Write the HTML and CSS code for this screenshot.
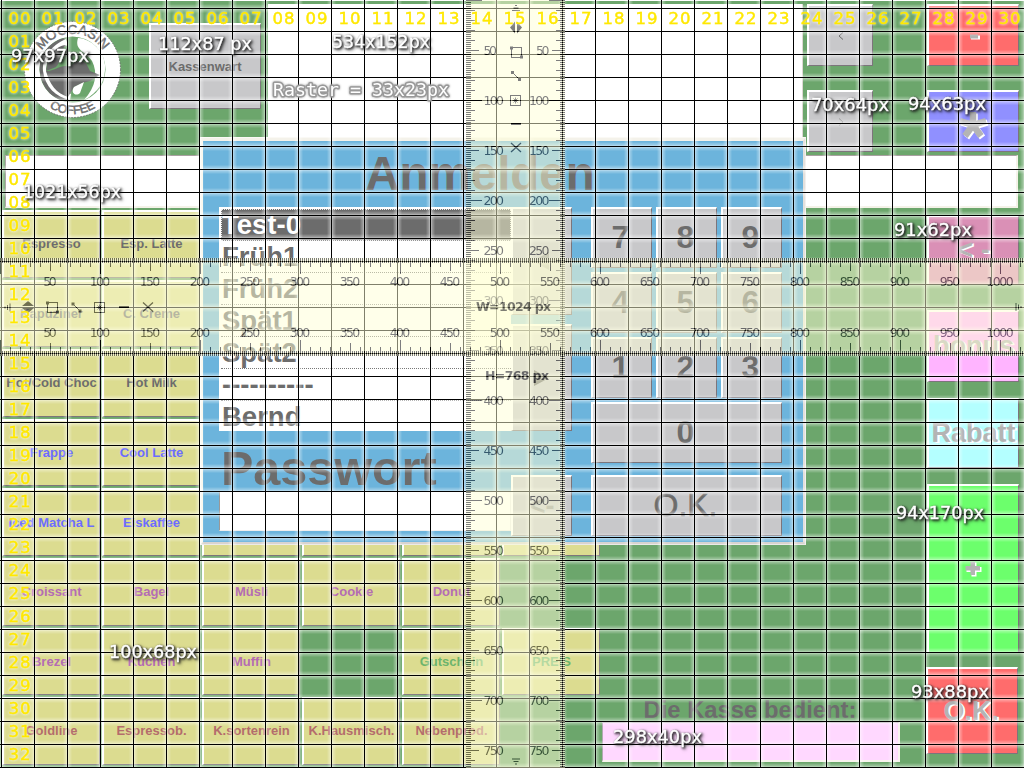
FILE: index.html
```html
<!DOCTYPE html>
<html lang="de">
<head>
<meta charset="utf-8">
<title>Kasse – Raster</title>
<link rel="stylesheet" href="styles.css">
</head>
<body>
<div class="screen">
  <div class="till">
    <header class="top">
      <svg class="logo" viewBox="0 0 97 97" width="97" height="97">
        <defs>
          <path id="arc-top" d="M12.500 48.500a36 36 0 0 1 72 0"/>
          <path id="arc-bottom" d="M4 48.500a44.500 44.500 0 0 0 89 0"/>
        </defs>
        <circle cx="48.500" cy="48.500" r="48" class="logo-rim"/>
        <circle cx="48.500" cy="48.500" r="33" class="logo-green"/>
        <path class="logo-dark" d="M40 17C22 22 14 38 16 52C18 68 30 80 46 81L46 77C34 75 24 66 21 54C19 42 24 30 42 20Z"/>
        <path class="logo-white" d="M42 18C28 24 18 36 19 50C21 66 32 76 46 79L47 73C34 70 24 60 22 48C23 36 32 28 44 24Z"/>
        <path class="logo-white" d="M54 17C68 18 80 30 81 44C82 60 74 72 60 79C72 66 74 52 68 40C62 30 50 30 54 17Z"/>
        <path class="logo-dark" d="M22 50C32 50 38 42 46 46C50 40 56 38 62 42L66 50L76 54L66 60L58 62L50 66L44 76C32 72 26 64 22 50Z"/>
        <path class="logo-dark" d="M24 38C28 30 36 24 42 24C34 32 38 40 32 46L22 50Z"/>
        <path class="logo-white" d="M50 66L60 61L56 72C52 76 46 72 50 66Z"/>
        <text class="logo-text"><textPath href="#arc-top" startOffset="50%" text-anchor="middle">MOCCASIN</textPath></text>
        <text class="logo-text small"><textPath href="#arc-bottom" startOffset="50%" text-anchor="middle">COFFEE</textPath></text>
      </svg>
      <button class="key gray clerk-key">Kassenwart</button>
      <div class="display"></div>
      <div class="nav">
        <button class="key gray nav-key" aria-label="&lt;"><svg width="8" height="10"><path d="M6 1.500L2 5L6 8.500"/></svg></button>
        <button class="key gray nav-key dim" aria-label="&gt;"><svg width="8" height="10"><path d="M2 1.500L6 5L2 8.500"/></svg></button>
      </div>
      <div class="ops">
        <button class="key red"><svg width="30" height="30"><path class="sh" d="M13 14.500h9v4h-9z"/><path class="fg" d="M12 13.500h8v4h-8z"/></svg></button>
        <button class="key violet"><svg class="star" width="34" height="34"><path class="sh-line" transform="translate(1.500 1.500)" d="M17 17V4M17 17L4 13M17 17L30 13M17 17L9 28M17 17L25 28"/><path class="fg-line" d="M17 17V4M17 17L4 13M17 17L30 13M17 17L9 28M17 17L25 28"/></svg></button>
      </div>
    </header>
    <div class="entry"></div>
    <main class="body">
      <div class="keys" id="keys"></div>
      <section class="clerk">
        <div class="clerk-label">Die Kasse bedient:</div>
        <div class="clerk-field"></div>
      </section>
      <aside class="side">
        <button class="key rose">&lt; -</button>
        <button class="key magenta">bonus</button>
        <button class="key cyan">Rabatt</button>
        <button class="key lime"><svg width="30" height="30"><path class="sh" d="M12.500 8.500h5v4.500h5v5h-5v4.500h-5V18h-5v-5h5z"/><path class="fg" d="M11.500 7.500h4.500v4.500h5v4.500h-5V21h-4.500v-4.500h-5V12h5z"/></svg></button>
        <button class="key red pay">O.K.</button>
      </aside>
    </main>
  </div>

  <section class="dialog">
    <h1 class="dialog-title">Anmelden</h1>
    <div class="dialog-body">
      <div class="login">
        <div class="list-row">
          <ul class="list">
            <li class="selected">Test-0</li><li>Früh1</li><li>Früh2</li><li>Spät1</li><li>Spät2</li><li>----------</li><li>Bernd</li>
          </ul>
          <div class="scroll">
            <button class="key gray"><svg width="18" height="18"><path class="tri" d="M0 9L16 0V18Z"/></svg></button>
            <button class="key gray"><svg width="18" height="18"><path class="tri strong" d="M1 1L16 9L1 17Z"/></svg></button>
          </div>
        </div>
        <div class="pw-label">Passwort</div>
        <div class="pw-row"><div class="pw-field"></div><button class="key gray back">&lt;-</button></div>
      </div>
      <div class="pad">
        <button class="key gray">7</button><button class="key gray">8</button><button class="key gray">9</button>
        <button class="key gray">4</button><button class="key gray">5</button><button class="key gray">6</button>
        <button class="key gray">1</button><button class="key gray">2</button><button class="key gray">3</button>
        <button class="key gray wide">0</button>
        <button class="key gray wide ok">O.K.</button>
      </div>
    </div>
  </section>

  <div class="raster"></div>

  <svg class="overlay" width="1024" height="768" viewBox="0 0 1024 768">
    <g class="ruler" id="ruler-v"><rect class="ruler-bg" x="466" y="0" width="99" height="768"/></g>
    <g class="ruler" id="ruler-h"><rect class="ruler-bg" x="0" y="258" width="1024" height="98"/></g>
    <g id="labels" class="labels"></g>
    <g id="notes" class="notes"></g>
  </svg>
</div>
<script src="script.js"></script>
</body>
</html>
```
FILE: styles.css
```css
* { box-sizing: border-box; }
body { margin: 0; background: #fff; font-family: "Liberation Sans", Arial, sans-serif; overflow: hidden; }
.screen { position: relative; width: 1024px; height: 768px; overflow: hidden; }
.till { width: 1024px; height: 768px; background: #6ca66c; border-top: 1px solid #fff; }

.key {
  display: flex; align-items: center; justify-content: center;
  margin: 0; padding: 0; border: 2px solid; border-color: #fff #7c757b #7c757b #fff;
  border-right-width: 1px; border-bottom-width: 1px;
  font: bold 13px "Liberation Sans", Arial, sans-serif; color: #6c6c6c; white-space: nowrap;
}
.gray { background: #c8c8ca; }
.red { background: #ff6c6c; }
.violet { background: #9090ff; }
.rose { background: #da90b6; }
.magenta { background: #ffb4ff; }
.cyan { background: #b4ffff; }
.lime { background: #6cff6c; }

.top { display: flex; height: 154px; }
.logo { margin: 20px 0 0 24px; }
.logo-rim { fill: #fff; stroke: #6c6c6c; stroke-width: 1; stroke-dasharray: 1.500 1.500; }
.logo-dark { fill: #6c6c6c; }
.logo-white { fill: #fff; }
.logo-green { fill: #6ca66c; }
.logo-text { font: 13.500px "Liberation Sans", Arial, sans-serif; fill: #6c6c6c; stroke: #6c6c6c; stroke-width: .5; }
.logo-text.small { font-size: 12px; }
.clerk-key { width: 112px; height: 86px; margin: 22px 0 0 28px; padding-right: 1px; }
.display { width: 535px; height: 151px; margin: 3px 0 0 7px; background: #fff; border-right: 1px solid #ddd8d4; }
.nav { display: flex; flex-direction: column; gap: 24px; margin: 3px 0 0 4px; }
.nav-key { width: 66px; height: 62px; }
.nav-key path { fill: none; stroke: #6c6c6c; }
.nav-key.dim path { stroke: #999; }
.ops { display: flex; flex-direction: column; gap: 24px; margin: 3px 0 0 54px; }
.ops .key { width: 92px; height: 62px; padding-right: 1px; }
.star { margin-top: 6px; }
.fg { fill: #b4b4b4; }
.sh { fill: #fff; }
.fg-line, .sh-line { fill: none; stroke: #b4b4b4; stroke-width: 6.500; }
.sh-line { stroke: #fff; }

.entry { width: 1013px; height: 53px; margin-left: 5px; background: #fff; border: 1px solid; border-color: #a8a0a0 #f4f2e8 #f4f2e8 #a8a0a0; border-width: 1px 2px 2px 1px; }

.body { display: flex; height: 560px; }
.keys { display: grid; width: 600px; grid-template-columns: repeat(6, 98px); grid-template-rows: repeat(8, 67.600px); gap: 2px; padding: 2px 0 0 2px; }
.keys .key { background: #dcdc90; padding-bottom: 1px; }
.keys .cold { color: #6c6cff; }
.keys .food { color: #b46cb4; }
.keys .bean { color: #b46c6c; }
.keys .gift { color: #6cb46c; }
.clerk { display: flex; flex-direction: column; justify-content: flex-end; width: 298px; margin-left: 2px; padding-bottom: 6px; }
.clerk-label { padding-right: 2px; text-align: center; font-weight: bold; font-size: 23.800px; line-height: 24px; color: #6c6c6c; }
.clerk-field { height: 40px; background: #ffd8ff; border: 1px solid; border-color: #b0a8b0 #f8f4ee #f8f4ee #b0a8b0; border-width: 1px 2px 2px 1px; }
.side { display: flex; flex-direction: column; width: 93px; margin-left: 26px; padding-top: 7px; }
.side .key { width: 92px; margin-left: 1px; font-size: 27px; color: #b4b4b4; text-shadow: 2px 1px 0 #fff; }
.side .rose { height: 70px; }
.side .magenta { height: 72px; margin-top: 25px; }
.side .cyan { height: 70px; margin-top: 16px; }
.side .lime { height: 169px; margin-top: 16px; }
.side .pay { height: 87px; margin: 14px 0 0; padding-right: 3px; }

.dialog { position: absolute; left: 200px; top: 137px; width: 606px; height: 408px; background: #6cb4dc; border: 3px solid; border-color: #f4f2ea #e4e0dc #d8d4d0 #f8f6ec; border-top-width: 4px; outline: 1px solid rgba(255,255,255,.5); outline-offset: -1px; }
.dialog-title { margin: 0; padding: 6px 0 0; font-size: 47.500px; line-height: 54px; height: 66px; width: 554px; text-align: center; color: #6c6c6c; }
.dialog-body { display: flex; gap: 19px; padding-left: 16px; }
.login { width: 353px; }
.list-row { display: flex; height: 224px; }
.list { width: 292px; margin: 0; padding: 2px 0 0 2px; background: #fff; list-style: none; overflow: hidden; }
.list li { height: 32px; padding-left: 1px; font-weight: bold; font-size: 27.500px; line-height: 32px; color: #6c6c6c; border-bottom: 1px dotted #777; }
.list .selected { background: #6c6c6c; color: #fff; border: 1px dotted #eee; padding-left: 0; line-height: 30px; }
.scroll { display: flex; flex-direction: column; gap: 9px; }
.scroll .key { width: 61px; height: 108px; }
.tri { fill: #999; }
.tri.strong { fill: #6c6c6c; }
.pw-label { height: 60px; padding: 7px 0 0 2px; font-weight: bold; font-size: 48.500px; line-height: 60px; color: #6c6c6c; }
.pw-row { display: flex; align-items: flex-end; height: 45px; }
.pw-field { width: 293px; height: 40px; margin-bottom: 5px; background: #fff; border: 1px solid; border-color: #999 #eee #eee #999; }
.back { width: 61px; height: 61px; font-size: 27px; color: #999; }
.pad { display: grid; grid-template-columns: repeat(3, 61px); grid-template-rows: repeat(4, 61px); grid-auto-rows: 61px; gap: 4px; }
.pad .key { font-size: 32px; padding-right: 3px; padding-bottom: 1px; }
.pad .wide { grid-column: 1 / -1; }
.pad .ok { margin-top: 8px; height: 61px; font-weight: normal; -webkit-text-stroke: .6px #6c6c6c; }

.raster {
  position: absolute; inset: 0;
  background-image:
    linear-gradient(to right, #000 1px, transparent 1px),
    linear-gradient(to bottom, #000 1px, transparent 1px),
    linear-gradient(to right, rgba(255,255,255,.46) 2px, rgba(255,255,255,.28) 2px 3px, rgba(255,255,255,.18) 3px 4px, rgba(255,255,255,.07) 4px 5px, transparent 5px 29px, rgba(255,255,255,.07) 29px 30px, rgba(255,255,255,.18) 30px 31px, rgba(255,255,255,.28) 31px 32px, rgba(255,255,255,.46) 32px),
    linear-gradient(to bottom, rgba(255,255,255,.46) 2px, rgba(255,255,255,.28) 2px 3px, rgba(255,255,255,.18) 3px 4px, rgba(255,255,255,.07) 4px 5px, transparent 5px 19px, rgba(255,255,255,.07) 19px 20px, rgba(255,255,255,.18) 20px 21px, rgba(255,255,255,.28) 21px 22px, rgba(255,255,255,.46) 22px);
  background-size: 33px 23px;
  background-position: 1px 8px;
}

.overlay { position: absolute; left: 0; top: 0; }
.ruler { opacity: .5; font: 12.500px "DejaVu Sans", sans-serif; }
.ruler-bg { fill: #ffffd6; }
.tick { fill: none; stroke: #000; stroke-width: 1; shape-rendering: crispEdges; }
.ruler .size { font-weight: bold; }
.icon { fill: none; stroke: #000; stroke-width: 1; }
.icon .solid { fill: #000; stroke: none; }
.labels { font: 16.500px "DejaVu Sans", sans-serif; fill: #ffe800; stroke: #ffe800; stroke-width: .4; filter: drop-shadow(0 0 1.500px rgba(255,255,255,.6)) drop-shadow(0 0 1px rgba(255,255,255,.4)); }
.notes { font: 17px "DejaVu Sans", sans-serif; fill: #fff; stroke: #fff; stroke-width: .35; filter: drop-shadow(1px 1px 1px #222) drop-shadow(1px 1px 1.500px rgba(0,0,0,.55)); }
.title-note { font: 17.500px "DejaVu Sans Mono", monospace; fill: #fff; stroke: #999; stroke-width: 3; stroke-linejoin: round; paint-order: stroke; filter: drop-shadow(0 0 1px #999); }
```
FILE: script.js
```js
// Product keys, row by row: [colour group, labels]; null leaves the cell free.
const rows = [
  ['', ['Espresso', 'Esp. Latte']],
  ['', ['Kapuziner', 'C. Creme']],
  ['', ['Hot/Cold Choc', 'Hot Milk']],
  ['cold', ['Frappe', 'Cool Latte']],
  ['cold', ['Iced Matcha L', 'Eiskaffee', '', '', '', '']],
  ['food', ['Croissant', 'Bagel', 'Müsli', 'Cookie', 'Donut']],
  ['food', ['Brezel', 'Kuchen', 'Muffin', null, 'Gutschein', 'PREIS']],
  ['bean', ['Goldline', 'Espressob.', 'K.sortenrein', 'K.Hausmisch.', 'Nebenprod.']]
];
const keys = document.getElementById('keys');
rows.forEach(([group, names], r) => names.forEach((name, c) => {
  if (name === null) return;
  const b = document.createElement('button');
  const g = r === 6 && c > 3 ? 'gift' : group;
  b.className = 'key' + (g ? ' ' + g : '');
  b.textContent = name;
  b.style.gridArea = (r + 1) + ' / ' + (c + 1);
  keys.append(b);
}));

const text = (x, y, s, len, extra = '') =>
  `<text x="${x}" y="${y}" textLength="${len}" ${extra}>${s}</text>`;

// Tool icons of a ruler, drawn around their own centres.
const icon = {
  rect: '<rect x="-5" y="-5" width="10" height="10"/><path class="solid" d="M-6.500-6h3v3h-3zM3.500 3h3v3h-3z"/>',
  line: '<path d="M-3.500-3.500L3.500 3.500"/><path class="solid" d="M-5-5h3v3h-3zM2 2h3v3h-3z"/>',
  star: '<rect x="-5" y="-5" width="10" height="10"/><path d="M0-3V3M-3 0H3M-2-2L2 2M2-2L-2 2" stroke-width=".8"/>',
  dash: '<path d="M-5 0H5" stroke-width="2"/>',
  cross: '<path d="M-5-4.500L5 4.500M5-4.500L-5 4.500" stroke-width="1.300"/>',
  flip: '<path class="solid" d="M-6 -1L0-6L6-1ZM-6 1L0 6L6 1Z"/>',
  grip: '<path d="M-4-2H4M-2.500 0.500H2.500M-1 3H1"/>'
};
const put = (name, x, y, rot = 0) =>
  `<g class="icon" transform="translate(${x} ${y}) rotate(${rot})">${icon[name]}</g>`;

// Tick lengths: 2 px raster, then 10, 50 and 100 px steps.
const reach = k => k % 100 === 0 ? 16 : k % 50 === 0 ? 13 : k % 10 === 0 ? 9 : 5;
let h = '', v = '', ht = '', vt = '';
for (let k = 0; k < 1024; k += 2) {
  const r = reach(k);
  ht += `M${k + .5} 258v${r}M${k + .5} 356v${-r}`;
  if (k < 768) vt += `M466 ${k + .5}h${r}M565 ${k + .5}h${-r}`;
}
h += `<path class="tick" d="${ht}"/>`;
v += `<path class="tick" d="${vt}"/>`;
for (let k = 50; k <= 1000; k += 50) {
  const n = String(k), w = n.length * 7 - .5;
  h += text(k - w / 2, 286, n, w) + text(k - w / 2, 337, n, w);
  if (k < 768) v += text(483.5, k + 5, n, w) + text(549.5 - w, k + 5, n, w);
}
h += text(476, 311, 'W=1024 px', 75, 'class="size"');
v += text(485, 380, 'H=768 px', 64, 'class="size"');
h += put('grip', 8, 307.5, 90) + put('flip', 28, 307) + put('rect', 52.5, 307.5) + put('line', 76.5, 307.5)
  + put('star', 99.5, 307.5) + put('dash', 124, 307) + put('cross', 148, 307) + put('grip', 1018, 307, -90);
v += put('grip', 516, 8.5, 180) + put('flip', 516, 27.5, 90) + put('rect', 516.5, 52.5) + put('line', 516, 76)
  + put('star', 515.5, 100.5) + put('dash', 516, 124) + put('cross', 516, 147.5) + put('grip', 516, 761);
document.getElementById('ruler-h').innerHTML += h;
document.getElementById('ruler-v').innerHTML += v;

// Column and row numbers of the raster.
let l = '';
const two = n => String(n).padStart(2, '0');
for (let c = 0; c <= 30; c++) l += text(8.5 + 33 * c, 24, two(c), 22);
for (let r = 1; r <= 32; r++) l += text(8.5, 24 + 23 * r, two(r), 22);
document.getElementById('labels').innerHTML = l;

// Size notes: x, baseline, text, width.
const notes = document.getElementById('notes');
notes.innerHTML = [
  [11, 62, '97x97px', 78], [158, 50, '112x87 px', 94], [332, 48, '534x152px', 98],
  [23, 198, '1021x56px', 98], [811, 111, '70x64px', 78], [908, 110, '94x63px', 78],
  [894, 236, '91x62px', 78], [109, 658, '100x68px', 88], [896, 519, '94x170px', 88],
  [911, 698, '93x88px', 78], [613, 743, '298x40px', 89]
].map(([x, y, s, w]) => text(x, y, s, w, 'lengthAdjust="spacingAndGlyphs"')).join('');
notes.insertAdjacentHTML('afterend', text(273, 96, 'Raster = 33x23px', 176, 'class="title-note" lengthAdjust="spacingAndGlyphs"'));
```
